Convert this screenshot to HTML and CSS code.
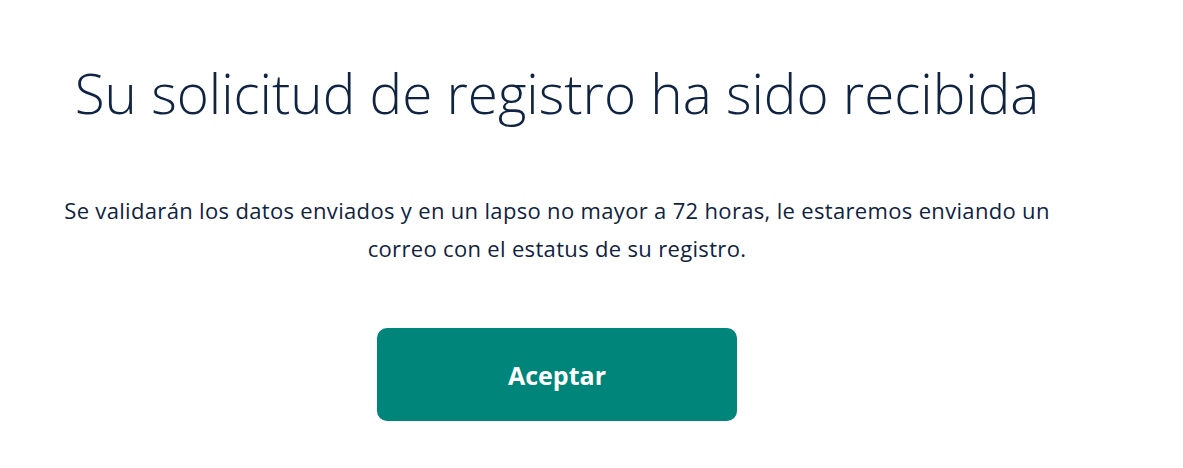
FILE: index.html
```html
<!DOCTYPE html>
<html lang="es">

<head>
    <meta charset="UTF-8">
    <meta name="viewport" content="width=device-width, initial-scale=1.0">
    <title>Registro recibido</title>
    <link rel="stylesheet" href="styles.css">
</head>

<body>
    <div class="container">
        <h1 class="titulo">Su solicitud de registro ha sido recibida</h1>
        <p class="mensaje">Se validarán los datos enviados y en un lapso no mayor a 72 horas, le estaremos enviando un correo con el estatus de su registro.</p>
        <button class="btn-aceptar">Aceptar</button>
    </div>
</body>

</html>
```

FILE: styles.css
```css
body {
    font-family: "Open Sans", "Noto Sans", sans-serif;
    color: #0f2342;
    margin: 0;
    background: #fff;
}

.container {
    width: 1114px;
    display: flex;
    flex-direction: column;
    align-items: center;
    text-align: center;
}

.titulo {
    font-weight: 300;
    font-size: 54.8px;
    margin: 53px 0 0;
    line-height: 80px;
}

.mensaje {
    font-size: 22px;
    letter-spacing: 0.33px;
    line-height: 38px;
    width: 1000px;
    margin: 58px 0 0;
}

.btn-aceptar {
    margin-top: 61px;
    width: 360px;
    height: 93px;
    background-color: #00857a;
    color: #fff;
    border: none;
    border-radius: 10px;
    font-family: "Open Sans", sans-serif;
    font-weight: 700;
    font-size: 25px;
    cursor: pointer;
}
```
